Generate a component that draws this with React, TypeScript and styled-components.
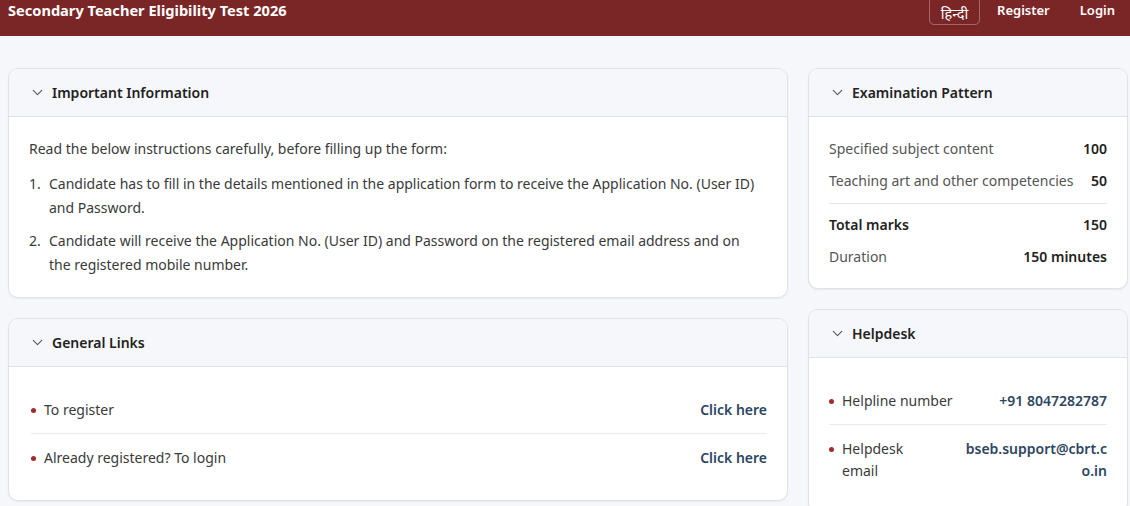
import React from 'react';
import styled, { createGlobalStyle } from 'styled-components';
import { ChevronDown } from 'lucide-react';

const GlobalStyle = createGlobalStyle`
  * { box-sizing: border-box; }
  body {
    margin: 0;
    background: #f6f7fa;
    font-family: "Noto Sans", "Open Sans", sans-serif;
    color: #3a3a3a;
  }
`;

// top bar
const TopBar = styled.header`
  height: 36px;
  background: #7b2626;
  display: flex;
  align-items: flex-start;
  justify-content: space-between;
  padding: 0 15px 0 8px;
`;

const Brand = styled.div`
  color: #fff;
  font-weight: 700;
  font-size: 14.6px;
  line-height: 20px;
`;

const Nav = styled.nav`
  display: flex;
  align-items: flex-start;
`;

const LangButton = styled.button`
  font-family: "Noto Sans", sans-serif;
  background: transparent;
  color: #fff;
  border: 1px solid rgba(255, 255, 255, 0.3);
  border-radius: 5px;
  font-size: 14.5px;
  width: 51px;
  height: 28px;
  margin: -3px 17px 0 0;
  padding: 3px 0 0;
  line-height: 20px;
`;

const NavLink = styled.a<{ $gap?: number }>`
  color: #fff;
  font-weight: 600;
  font-size: 13px;
  line-height: 20px;
  text-decoration: none;
  margin-left: ${(p) => p.$gap ?? 0}px;
`;

// page body
const Main = styled.main`
  display: grid;
  grid-template-columns: 780px 320px;
  column-gap: 20px;
  padding: 32px 0 0 8px;
  align-items: start;
`;

const Column = styled.div`
  display: flex;
  flex-direction: column;
  gap: 20px;
`;

const Card = styled.section`
  background: #fff;
  border: 1px solid #dfe2e7;
  border-radius: 10px;
  box-shadow: 0 1px 2px rgba(0, 0, 0, 0.06);
  overflow: hidden;
`;

const CardHead = styled.div`
  height: 48px;
  display: flex;
  align-items: center;
  gap: 6px;
  padding-left: 20px;
  background: #f6f7fa;
  border-bottom: 1px solid #dfe2e7;
  font-weight: 600;
  font-size: 14px;
  color: #222;
  svg { color: #555; }
`;

const CardBody = styled.div<{ $pad: string }>`
  padding: ${(p) => p.$pad};
  font-size: 14px;
`;

const Lead = styled.p`
  margin: 0 0 13px;
  line-height: 20px;
`;

const Steps = styled.ol`
  margin: 0;
  padding: 0 9px 0 0;
  list-style: none;
  counter-reset: step;
  li {
    display: flex;
    line-height: 24px;
    counter-increment: step;
  }
  li + li { margin-top: 9px; }
  li::before {
    content: counter(step) ".";
    flex: none;
    width: 20px;
  }
`;

const LinkRow = styled.div`
  display: flex;
  justify-content: space-between;
  align-items: flex-start;
  padding: 13px 0 12px;
  line-height: 22px;
  & + & { border-top: 1px solid #e8eaee; }
`;

const Bullet = styled.span`
  display: flex;
  align-items: flex-start;
  gap: 8px;
  &::before {
    content: '';
    flex: none;
    width: 5px;
    height: 5px;
    border-radius: 50%;
    background: #a52a2a;
    margin-top: 9px;
  }
`;

const Action = styled.a`
  color: #2d4560;
  font-weight: 600;
  text-decoration: none;
  text-align: right;
`;

const StatRow = styled.div<{ $strong?: boolean }>`
  display: flex;
  justify-content: space-between;
  line-height: 22px;
  padding: 5px 0;
  color: ${(p) => (p.$strong ? '#222' : '#555')};
  font-weight: ${(p) => (p.$strong ? 600 : 400)};
  b { font-weight: 600; color: #222; }
`;

const Rule = styled.hr`
  border: none;
  border-top: 1px solid #e3e5e9;
  margin: 6px 0 5px;
`;

const HelpValue = styled(Action)`
  max-width: 144px;
  word-break: break-all;
`;

const Panel: React.FC<{ title: string; children: React.ReactNode }> = ({ title, children }) => (
  <Card>
    <CardHead>
      <ChevronDown size={17} strokeWidth={1.5} />
      {title}
    </CardHead>
    {children}
  </Card>
);

export default function App() {
  return (
    <>
      <GlobalStyle />
      <TopBar>
        <Brand>Secondary Teacher Eligibility Test 2026</Brand>
        <Nav>
          <LangButton>हिन्दी</LangButton>
          <NavLink href="#">Register</NavLink>
          <NavLink href="#" $gap={30}>Login</NavLink>
        </Nav>
      </TopBar>
      <Main>
        <Column>
          <Panel title="Important Information">
            <CardBody $pad="22px 20px 20px 20px">
              <Lead>Read the below instructions carefully, before filling up the form:</Lead>
              <Steps>
                <li>
                  Candidate has to fill in the details mentioned in the application form to receive
                  the Application No. (User ID) and Password.
                </li>
                <li>
                  Candidate will receive the Application No. (User ID) and Password on the registered
                  email address and on the registered mobile number.
                </li>
              </Steps>
            </CardBody>
          </Panel>
          <Panel title="General Links">
            <CardBody $pad="19px 20px 19px 22px">
              <LinkRow>
                <Bullet>To register</Bullet>
                <Action href="#">Click here</Action>
              </LinkRow>
              <LinkRow>
                <Bullet>Already registered? To login</Bullet>
                <Action href="#">Click here</Action>
              </LinkRow>
            </CardBody>
          </Panel>
        </Column>
        <Column>
          <Panel title="Examination Pattern">
            <CardBody $pad="16px 20px 15px 20px">
              <StatRow>
                <span>Specified subject content</span>
                <b>100</b>
              </StatRow>
              <StatRow>
                <span>Teaching art and other competencies</span>
                <b>50</b>
              </StatRow>
              <Rule />
              <StatRow $strong>
                <span>Total marks</span>
                <span>150</span>
              </StatRow>
              <StatRow>
                <span>Duration</span>
                <b>150 minutes</b>
              </StatRow>
            </CardBody>
          </Panel>
          <Panel title="Helpdesk">
            <CardBody $pad="19px 20px 19px 20px">
              <LinkRow>
                <Bullet>Helpline number</Bullet>
                <Action href="#">+91 8047282787</Action>
              </LinkRow>
              <LinkRow>
                <Bullet>Helpdesk<br />email</Bullet>
                <HelpValue href="#">bseb.support@cbrt.co.in</HelpValue>
              </LinkRow>
            </CardBody>
          </Panel>
        </Column>
      </Main>
    </>
  );
}
